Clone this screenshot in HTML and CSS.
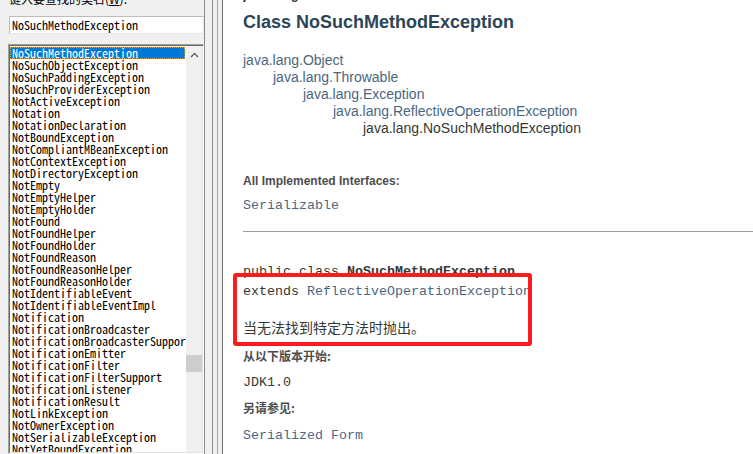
FILE: index.html
```html
<!DOCTYPE html>
<html>
<head>
<meta charset="utf-8">
<link rel="stylesheet" href="styles.css">
</head>
<body>
<div class="left">
  <div class="label-clip"><div class="label">键入要查找的类名(<u>W</u>):</div></div>
  <div class="search">NoSuchMethodException</div>
  <div class="listbox">
    <div class="items">
      <div class="row sel">NoSuchMethodException</div>
      <div class="row">NoSuchObjectException</div>
      <div class="row">NoSuchPaddingException</div>
      <div class="row">NoSuchProviderException</div>
      <div class="row">NotActiveException</div>
      <div class="row">Notation</div>
      <div class="row">NotationDeclaration</div>
      <div class="row">NotBoundException</div>
      <div class="row">NotCompliantMBeanException</div>
      <div class="row">NotContextException</div>
      <div class="row">NotDirectoryException</div>
      <div class="row">NotEmpty</div>
      <div class="row">NotEmptyHelper</div>
      <div class="row">NotEmptyHolder</div>
      <div class="row">NotFound</div>
      <div class="row">NotFoundHelper</div>
      <div class="row">NotFoundHolder</div>
      <div class="row">NotFoundReason</div>
      <div class="row">NotFoundReasonHelper</div>
      <div class="row">NotFoundReasonHolder</div>
      <div class="row">NotIdentifiableEvent</div>
      <div class="row">NotIdentifiableEventImpl</div>
      <div class="row">Notification</div>
      <div class="row">NotificationBroadcaster</div>
      <div class="row">NotificationBroadcasterSupport</div>
      <div class="row">NotificationEmitter</div>
      <div class="row">NotificationFilter</div>
      <div class="row">NotificationFilterSupport</div>
      <div class="row">NotificationListener</div>
      <div class="row">NotificationResult</div>
      <div class="row">NotLinkException</div>
      <div class="row">NotOwnerException</div>
      <div class="row">NotSerializableException</div>
      <div class="row">NotYetBoundException</div>
    </div>
    <div class="vscroll">
      <div class="up"><svg width="9" height="6" viewBox="0 0 9 6"><polyline points="1,5 4.5,1.5 8,5" fill="none" stroke="#606060" stroke-width="1.4"/></svg></div>
      <div class="track"><div class="thumb"></div></div>
    </div>
  </div>
</div>
<div class="splitter"></div>
<div class="right">
  <div class="pkg-clip"><div class="pkg">java.lang</div></div>
  <div class="title">Class NoSuchMethodException</div>
  <div class="tree">
    <div class="lvl0">java.lang.Object</div>
    <div class="lvl1">java.lang.Throwable</div>
    <div class="lvl2">java.lang.Exception</div>
    <div class="lvl3">java.lang.ReflectiveOperationException</div>
    <div class="lvl4 cur">java.lang.NoSuchMethodException</div>
  </div>
  <div class="dt imp">All Implemented Interfaces:</div>
  <div class="code link ser">Serializable</div>
  <div class="hr"></div>
  <div class="pre">
    <div>public class <b>NoSuchMethodException</b></div>
    <div>extends <span class="link">ReflectiveOperationException</span></div>
  </div>
  <div class="desc">当无法找到特定方法时抛出。</div>
  <div class="dt cjk since">从以下版本开始:</div>
  <div class="code jdk">JDK1.0</div>
  <div class="dt cjk see">另请参见:</div>
  <div class="code link sf">Serialized Form</div>
  <div class="redbox"></div>
</div>
</body>
</html>
```
FILE: styles.css
```css
body {
  margin: 0;
  width: 753px;
  height: 454px;
  overflow: hidden;
  display: flex;
  background: #f0f0f0;
}
.left {
  width: 205px;
  box-sizing: border-box;
  border-right: 1px solid #8c8c8c;
  padding-left: 8px;
  background: #f0f0f0;
  display: flex;
  flex-direction: column;
}
.label-clip {
  height: 7px;
  overflow: hidden;
}
.label {
  margin-top: -8px;
  padding-left: 1px;
  font: 12px/14px "Noto Sans CJK SC", sans-serif;
  color: #000;
  white-space: nowrap;
}
.search {
  margin: 9px 0 0 1px;
  width: 195px;
  height: 18px;
  box-sizing: border-box;
  border: 1px solid;
  border-color: #bdbdbd #e6e6e6 #e6e6e6 #bdbdbd;
  background: #fff;
  padding-left: 2px;
  font: 12px/16px "Noto Sans Mono CJK SC", "Liberation Mono", monospace;
  color: #000;
  white-space: nowrap;
}
.listbox {
  margin-top: 10px;
  flex: 1;
  min-height: 0;
  width: 196px;
  box-sizing: border-box;
  display: flex;
  border: 1px solid;
  border-color: #a0a0a0 #ffffff #ffffff #a0a0a0;
  box-shadow: inset 1px 1px 0 #696969, inset -1px -1px 0 #e3e3e3;
  padding: 1px;
  background: #fff;
}
.items {
  width: 176px;
  padding-top: 1px;
  overflow: hidden;
}
.row {
  height: 12px;
  line-height: 12px;
  padding-left: 2px;
  white-space: nowrap;
  font-family: "Noto Sans Mono CJK SC", "Liberation Mono", monospace;
  font-size: 12px;
  color: #000;
}
.row.sel {
  width: 175px;
  box-sizing: border-box;
  padding-left: 1px;
  background: #0078d7;
  color: #fff;
  border: 1px dotted #e89a2c;
  line-height: 10px;
}
.vscroll {
  width: 16px;
  background: #f0f0f0;
  display: flex;
  flex-direction: column;
}
.up {
  height: 17px;
  display: flex;
  align-items: center;
  justify-content: center;
}
.thumb {
  margin-top: 292px;
  height: 17px;
  background: #cdcdcd;
}
.splitter {
  width: 18px;
  background: linear-gradient(to right,
    #f0f0f0 0 7px, #8a8a8a 7px 8px,
    #f0f0f0 8px 12px, #a8a8a8 12px 13px,
    #f0f0f0 13px 17px, #6d6d6d 17px 18px);
}
.right {
  flex: 1;
  position: relative;
  overflow: hidden;
  background: #fff;
  padding-left: 20px;
  font-family: "Liberation Sans", Arial, sans-serif;
  color: #353833;
}
.pkg-clip {
  height: 3px;
  overflow: hidden;
}
.pkg {
  margin-top: -13px;
  font: bold 13px/15px "Liberation Sans", Arial, sans-serif;
  color: #2c4557;
}
.title {
  margin-top: 9px;
  font: bold 18px/21px "Liberation Sans", Arial, sans-serif;
  color: #2c4557;
  white-space: nowrap;
}
.tree {
  margin-top: 19px;
  font-size: 14px;
  line-height: 17px;
  color: #4a6782;
  white-space: nowrap;
}
.lvl1 { padding-left: 30px; }
.lvl2 { padding-left: 60px; }
.lvl3 { padding-left: 90px; }
.lvl4 { padding-left: 120px; }
.tree .cur { color: #353833; }
.dt {
  font: bold 12px/14px "Liberation Sans", Arial, sans-serif;
  color: #4e4e4e;
}
.dt.cjk {
  font-family: "Noto Sans CJK SC", sans-serif;
}
.code {
  font: 13.33px/16px "Liberation Mono", "Courier New", monospace;
  color: #353833;
  white-space: nowrap;
}
.link { color: #4a6782; }
.imp { margin-top: 37px; }
.ser { margin-top: 10px; }
.hr {
  margin-top: 17px;
  border-top: 1px solid #9c9c9c;
}
.pre {
  margin-top: 30px;
  font: 13.33px/20px "Liberation Mono", "Courier New", monospace;
  color: #353833;
  white-space: nowrap;
}
.desc {
  margin-top: 15px;
  font: 14px/20px "Noto Sans CJK SC", sans-serif;
  color: #353833;
}
.since { margin-top: 12px; }
.jdk { margin-top: 12px; }
.see { margin-top: 10px; }
.sf { margin-top: 13px; }
.redbox {
  position: absolute;
  left: 10px;
  top: 273px;
  width: 299px;
  height: 73px;
  box-sizing: border-box;
  border: 4px solid #fb1d1d;
  border-radius: 3px;
}
```
